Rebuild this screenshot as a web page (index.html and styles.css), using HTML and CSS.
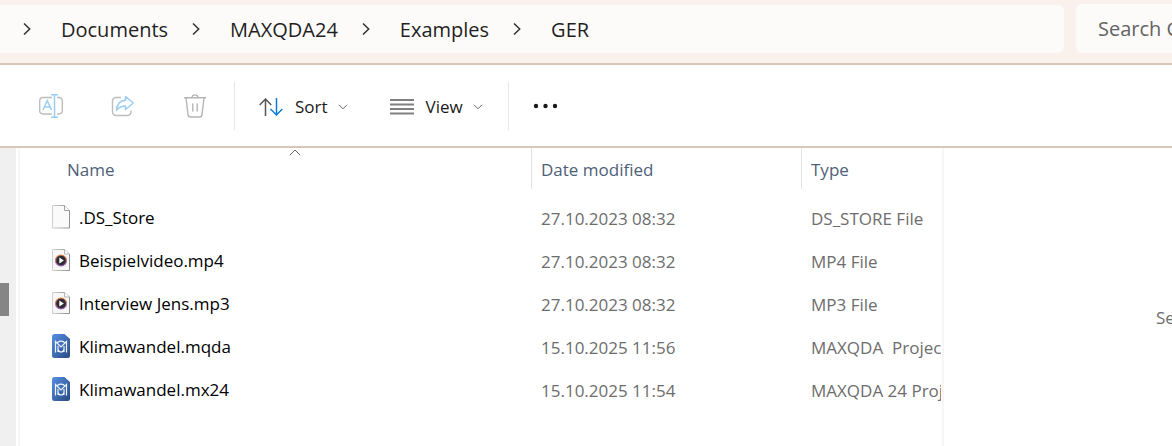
FILE: index.html
```html
<!DOCTYPE html>
<html lang="en">
<head>
  <meta charset="UTF-8">
  <title>GER - File Explorer</title>
  <link rel="stylesheet" href="styles.css">
</head>
<body>
  <!-- shared icons -->
  <svg class="sprite" aria-hidden="true">
    <defs>
      <linearGradient id="blue" x1="0" y1="0" x2="1" y2="1">
        <stop offset="0" stop-color="#5590e4"/>
        <stop offset="1" stop-color="#284a80"/>
      </linearGradient>
      <linearGradient id="ring" x1="0" y1="0" x2="0" y2="1">
        <stop offset="0" stop-color="#f08a3c"/>
        <stop offset="1" stop-color="#9a62c4"/>
      </linearGradient>
      <linearGradient id="paper" x1="0" y1="0" x2="1" y2="0">
        <stop offset="0" stop-color="#d0d0d0"/>
        <stop offset="1" stop-color="#909090"/>
      </linearGradient>
    </defs>
    <symbol id="crumb" viewBox="0 0 8 12">
      <path d="M1 .5 6.700 6 1 11.500" fill="none" stroke="#333" stroke-width="1.500"/>
    </symbol>
    <symbol id="down" viewBox="0 0 10 6">
      <path d="M1 .8 5 4.800 9 .8" fill="none" stroke="#666" stroke-width="1"/>
    </symbol>
    <symbol id="media" viewBox="0 0 18 24">
      <path d="M.5 1.500h12l5 4.500v16.500H.5z" fill="#f7f7f7" stroke="url(#paper)"/>
      <path d="M12.500 1.500v4.500h5" fill="#fff" stroke="#b5b5b5"/>
      <circle cx="9" cy="12.500" r="5.500" fill="#2e2b33" stroke="url(#ring)" stroke-width="1.200"/>
      <path d="M7.300 9.500v6l4.500-3z" fill="#fff"/>
    </symbol>
    <symbol id="maxqda" viewBox="0 0 18 24">
      <path d="M2.500 0H12.500L18 5V21.500A2.500 2.500 0 0 1 15.500 24H2.500A2.500 2.500 0 0 1 0 21.500V2.500A2.500 2.500 0 0 1 2.500 0Z" fill="url(#blue)"/>
      <path d="M3.500 18.500V7.500L9 13 14.500 7.500V18.500M6 18V12M12 18V12M5.500 8.500C7.500 7 10.500 7 12.500 8.500M6 15.500C7 18.800 11 18.800 12 15.500" fill="none" stroke="#f0f5fd" stroke-width="1.200"/>
    </symbol>
  </svg>

  <header class="topbar">
    <nav class="address" aria-label="Address">
      <svg class="crumb"><use href="#crumb"/></svg>
      <a href="#">Documents</a>
      <svg class="crumb"><use href="#crumb"/></svg>
      <a href="#">MAXQDA24</a>
      <svg class="crumb"><use href="#crumb"/></svg>
      <a href="#">Examples</a>
      <svg class="crumb"><use href="#crumb"/></svg>
      <a href="#">GER</a>
    </nav>
    <input class="search" type="text" placeholder="Search GER" aria-label="Search GER">
  </header>

  <div class="toolbar">
    <button class="tool" aria-label="Rename" disabled>
      <svg width="24" height="24" viewBox="0 0 24 24" fill="none">
        <path d="M13 3.500H4A3.500 3.500 0 0 0 .7 7v9.500A3.500 3.500 0 0 0 4 20h9M18 3.500h2A3.500 3.500 0 0 1 23.300 7v9.500A3.500 3.500 0 0 1 20 20h-2" stroke="#bdbdbd" stroke-width="1.400"/>
        <path d="M4 16 8.200 6.500 12.500 16M5.500 13h5.500M12 .8h7M12 23.200h7M15.500 1v22" stroke="#99cdf3" stroke-width="1.500"/>
      </svg>
    </button>
    <button class="tool" aria-label="Share" disabled>
      <svg width="24" height="24" viewBox="0 0 24 24" fill="none">
        <path d="M10 3.500H5A3.500 3.500 0 0 0 1.500 7v11A3.500 3.500 0 0 0 5 21.500h11.500A3.500 3.500 0 0 0 20 18v-1.500" stroke="#bdbdbd" stroke-width="1.400"/>
        <path d="M14.500 2.500 22.300 9 14.500 15.500V12C10.500 12 8 13 5.500 16.300 6 10.500 9 6.500 14.500 6.300Z" stroke="#99cdf3" stroke-width="1.500" stroke-linejoin="round"/>
      </svg>
    </button>
    <button class="tool" aria-label="Delete" disabled>
      <svg width="24" height="24" viewBox="0 0 24 24" fill="none" stroke="#b5b5b5" stroke-width="1.400">
        <path d="M1 3.800H23M9 3.500C9.300 0 14.700 0 15 3.500M3 4 5 20.500A2.500 2.500 0 0 0 7.500 23h9A2.500 2.500 0 0 0 19 20.500L21 4M9.800 9.500v8M14.200 9.500v8"/>
      </svg>
    </button>
    <span class="separator"></span>
    <button class="menu">
      <svg width="24" height="20" viewBox="0 0 24 20" fill="none" stroke-width="1.500">
        <path d="M6.500 19V2M.7 8 6.500 2 12.300 8" stroke="#555"/>
        <path d="M17.500 1V18M11.500 12 17.500 18 23.300 12" stroke="#0a7ddb"/>
      </svg>
      Sort
      <svg class="down"><use href="#down"/></svg>
    </button>
    <button class="menu view">
      <svg width="24" height="18" viewBox="0 0 24 18" stroke="#808080" stroke-width="2">
        <path d="M0 2H24M0 6.500H24M0 11H24M0 15.500H24"/>
      </svg>
      View
      <svg class="down"><use href="#down"/></svg>
    </button>
    <span class="separator"></span>
    <button class="more" aria-label="See more">
      <svg width="26" height="6" viewBox="0 0 26 6" fill="#1a1a1a">
        <circle cx="3" cy="3" r="2.200"/><circle cx="12.500" cy="3" r="2.200"/><circle cx="22" cy="3" r="2.200"/>
      </svg>
    </button>
  </div>

  <main class="panes">
    <div class="scrollbar"><div class="thumb"></div></div>
    <section class="files">
      <table>
        <thead>
          <tr>
            <th class="col-name">
              <svg class="sorted" viewBox="0 0 12 7"><path d="M.8 6.200 6 1 11.200 6.200" fill="none" stroke="#666"/></svg>
              Name
            </th>
            <th class="col-date">Date modified</th>
            <th>Type</th>
          </tr>
        </thead>
        <tbody>
          <tr>
            <td class="name">
              <svg class="icon" viewBox="0 0 18 24">
                <path d="M.5 .5h12l5 5v17.500H.5z" fill="#fafafa" stroke="url(#paper)"/>
                <path d="M12.500 .5v5h5" fill="#fff" stroke="#a0a0a0"/>
              </svg>.DS_Store
            </td>
            <td>27.10.2023 08:32</td>
            <td>DS_STORE File</td>
          </tr>
          <tr>
            <td class="name"><svg class="icon"><use href="#media"/></svg>Beispielvideo.mp4</td>
            <td>27.10.2023 08:32</td>
            <td>MP4 File</td>
          </tr>
          <tr>
            <td class="name"><svg class="icon"><use href="#media"/></svg>Interview Jens.mp3</td>
            <td>27.10.2023 08:32</td>
            <td>MP3 File</td>
          </tr>
          <tr>
            <td class="name"><svg class="icon"><use href="#maxqda"/></svg>Klimawandel.mqda</td>
            <td>15.10.2025 11:56</td>
            <td>MAXQDA  Project</td>
          </tr>
          <tr>
            <td class="name"><svg class="icon"><use href="#maxqda"/></svg>Klimawandel.mx24</td>
            <td>15.10.2025 11:54</td>
            <td>MAXQDA 24 Project</td>
          </tr>
        </tbody>
      </table>
    </section>
    <aside class="preview">Select a file to preview.</aside>
  </main>
</body>
</html>
```

FILE: styles.css
```css
* {
  box-sizing: border-box;
}
body {
  margin: 0;
  min-height: 100vh;
  display: flex;
  flex-direction: column;
  background: #fff;
  color: #1a1a1a;
  font-family: "Segoe UI", "Open Sans", "Noto Sans", sans-serif;
  font-size: 17px;
}
button,
input {
  font: inherit;
  color: inherit;
  border: none;
  background: none;
  padding: 0;
}
.sprite {
  position: absolute;
  width: 0;
  height: 0;
}

/* address bar */
.topbar {
  display: grid;
  grid-template-columns: minmax(0, 1fr) 96px;
  gap: 12px;
  padding: 4px 0 10px;
  background: #faf1ec;
  border-bottom: 2px solid #d8c6b6;
  font-size: 20px;
}
.address {
  display: flex;
  align-items: center;
  height: 48px;
  margin-top: 1px;
  padding-left: 23px;
  background: #fcfbf9;
  border-radius: 0 6px 6px 0;
}
.address a {
  color: #1f1f1f;
  text-decoration: none;
  margin: 0 24px 0 30px;
}
.crumb {
  width: 8px;
  height: 12px;
  flex: none;
}
.search {
  width: 100%;
  padding-left: 22px;
  background: #fcfbf9;
  border-radius: 6px 0 0 6px;
}
.search::placeholder {
  color: #636363;
}

/* command bar */
.toolbar {
  display: flex;
  align-items: center;
  height: 83px;
  padding-left: 15px;
  border-bottom: 2px solid #d8c6b6;
}
.toolbar svg {
  display: block;
}
.tool {
  width: 72px;
  display: flex;
  justify-content: center;
}
.separator {
  width: 1px;
  height: 48px;
  margin: 0 0 0 3px;
  background: #e6e6e6;
}
.menu {
  display: flex;
  align-items: center;
  gap: 12px;
  padding: 2px 18px 0 24px;
}
.view {
  padding-right: 22px;
}
.down {
  width: 10px;
  height: 6px;
  margin-left: -2px;
}
.more {
  padding: 0 24px;
}

/* panes */
.panes {
  flex: 1;
  display: flex;
}
.scrollbar {
  width: 16px;
  background: #f0f0f0;
}
.thumb {
  width: 9px;
  height: 33px;
  margin-top: 135px;
  background: #858585;
}
.files {
  flex: 1;
  min-width: 0;
  margin-left: 2px;
  padding: 0 1px 0 32px;
  border-left: 2px solid #f6f6f6;
}
table {
  width: 100%;
  table-layout: fixed;
  border-collapse: separate;
  border-spacing: 0;
}
thead::after {
  content: "";
  display: block;
  height: 8px;
}
th {
  position: relative;
  height: 41px;
  padding: 2px 0 0 9px;
  color: #4e6078;
  font-weight: normal;
  text-align: left;
}
.col-name {
  width: 480px;
  padding-left: 15px;
  border-right: 1px solid #e2e2e2;
}
.col-date {
  width: 270px;
  border-right: 1px solid #e2e2e2;
}
.sorted {
  position: absolute;
  top: 1px;
  left: 6px;
  right: 0;
  margin: 0 auto;
  width: 12px;
  height: 7px;
}
td {
  height: 43px;
  padding: 0 0 0 9px;
  color: #6d6d6d;
  white-space: pre;
  overflow: hidden;
}
.name {
  padding: 0 0 3px;
  color: #000;
  white-space: nowrap;
}
.icon {
  width: 18px;
  height: 24px;
  margin-right: 9px;
  vertical-align: -5px;
}
.preview {
  width: 230px;
  padding: 158px 0 0 212px;
  border-left: 2px solid #f6f6f6;
  color: #6d6d6d;
  white-space: nowrap;
  overflow: hidden;
}
```
